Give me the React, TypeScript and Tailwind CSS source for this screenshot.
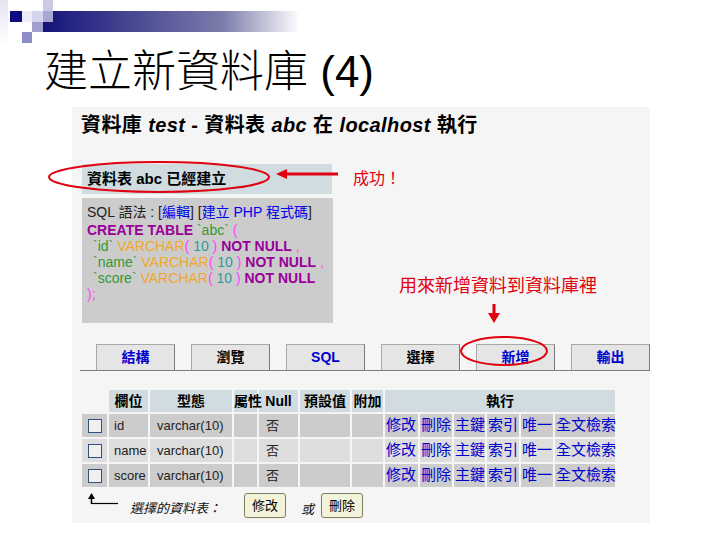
import React from 'react';

const F = "font-['Liberation_Sans','Noto_Sans_CJK_TC',sans-serif]";

const Deco = () => (
  <svg width="300" height="45" viewBox="0 0 300 45" className="block">
    <defs>
      <linearGradient id="bar" gradientUnits="userSpaceOnUse" x1="43" y1="0" x2="300" y2="0">
        <stop offset="0" stopColor="#14147a" />
        <stop offset="0.7" stopColor="#7c7cab" />
        <stop offset="1" stopColor="#ffffff" />
      </linearGradient>
      <linearGradient id="strip" x1="0" x2="0" y1="0" y2="1">
        <stop offset="0" stopColor="#e4e4f2" />
        <stop offset="1" stopColor="#ffffff" />
      </linearGradient>
    </defs>
    <rect x="0" y="0" width="8" height="45" fill="url(#strip)" />
    <rect x="43" y="11" width="257" height="21" fill="url(#bar)" />
    <rect x="43" y="0" width="10" height="11" fill="#cacae4" />
    <rect x="10" y="11" width="12" height="11" fill="#0c0c80" />
    <rect x="22" y="11" width="10" height="11" fill="#ececf6" />
    <rect x="32" y="11" width="11" height="11" fill="#d4d4ec" />
    <rect x="43" y="11" width="10" height="11" fill="#a8a8d4" />
    <rect x="32" y="22" width="11" height="10" fill="#a0a0d0" />
    <rect x="22" y="32" width="10" height="11" fill="#8c8cc6" />
  </svg>
);

const tabs = [
  { label: '結構', blue: true },
  { label: '瀏覽', blue: false },
  { label: 'SQL', blue: true },
  { label: '選擇', blue: false },
  { label: '新增', blue: true },
  { label: '輸出', blue: true },
];

const fields = ['id', 'name', 'score'];
const acts = ['修改', '刪除', '主鍵', '索引', '唯一', '全文檢索'];

const Box = () => (
  <span className="inline-block w-[14px] h-[14px] border border-[#2f5378] bg-[#f0f0f0] align-middle" />
);

const Btn = ({ children }: { children: React.ReactNode }) => (
  <span className="inline-flex items-start justify-center pt-[2px] w-[42px] h-[25px] bg-[#f3f3dc] border border-[#7d7d5a] rounded-[3px] text-[13px] text-black">
    {children}
  </span>
);

const P = ({ children }: { children: React.ReactNode }) => <span className="text-[#ff44ff]">{children}</span>;
const G = ({ children }: { children: React.ReactNode }) => <span className="text-[#339933]">{children}</span>;
const O = ({ children }: { children: React.ReactNode }) => <span className="text-[#f0a830]">{children}</span>;
const T = ({ children }: { children: React.ReactNode }) => <span className="text-[#2f9a9a]">{children}</span>;
const K = ({ children }: { children: React.ReactNode }) => <span className="text-[#990099] font-bold">{children}</span>;

const Col = ({ name }: { name: string }) => (
  <div className="pl-[6px]">
    <G>`{name}`</G> <O>VARCHAR</O><P>(</P> <T>10</T> <P>)</P> <K>NOT NULL</K>
    {name !== 'score' && <P> ,</P>}
  </div>
);

export default function App() {
  return (
    <div className={`w-[720px] h-[540px] bg-white overflow-hidden ${F}`}>
      <Deco />
      <div className="pl-[44px] text-[44px] leading-[54px] font-light text-black">建立新資料庫 (4)</div>

      <div className="relative mt-[8px] ml-[72px] w-[578px] h-[416px] bg-[#f5f5f5] text-[#111]">
        <div className="pl-[9px] pt-[7px] text-[20px] leading-[22px] font-bold tracking-[0.4px] text-black">
          資料庫 <i>test</i> - 資料表 <i>abc</i> 在 <i>localhost</i> 執行
        </div>

        <div className="mt-[28px] ml-[10px] flex items-center">
          <div className="w-[250px] h-[30px] bg-[#d0dce0] pl-[5px] flex items-center font-bold text-[15px] text-black">
            資料表 abc 已經建立
          </div>
          <div className="ml-[21px] text-[16px] text-[#e00010]">成功！</div>
        </div>

        <div className="mt-[4px] ml-[10px] flex items-end">
          <div className="w-[251px] h-[125px] bg-[#cccccc] px-[5px] pt-[6px] text-[14px] leading-[16px]">
            <div className="mb-[2px] text-[#222]">
              SQL 語法 : [<span className="text-[#0000ee]">編輯</span>] [<span className="text-[#0000ee]">建立 PHP 程式碼</span>]
            </div>
            <div>
              <K>CREATE TABLE</K> <G>`abc`</G> <P>(</P>
            </div>
            {fields.map((f) => (
              <Col key={f} name={f} />
            ))}
            <div>
              <P>);</P>
            </div>
          </div>
          <div className="ml-[66px] flex flex-col">
            <div className="text-[18px] leading-[22px] text-[#e00010]">用來新增資料到資料庫裡</div>
            <svg width="12" height="19" viewBox="0 0 12 19" className="ml-[89px] mt-[7px]">
              <rect x="4.5" y="0" width="3" height="10" fill="#e00010" />
              <polygon points="0,9 12,9 6,19" fill="#e00010" />
            </svg>
          </div>
        </div>

        <div className="mt-[21px] ml-[8px] pl-[16px] flex gap-[16px] items-end border-b border-[#808080]">
          {tabs.map((t) => (
            <div
              key={t.label}
              className={`w-[79px] h-[26px] bg-[#e5e5e5] border border-b-0 border-[#a8a8a8] border-r-[#7a7a7a] flex items-center justify-center text-[14px] font-bold ${t.blue ? 'text-[#0000cc]' : 'text-black'}`}
            >
              {t.label}
            </div>
          ))}
        </div>

        <table className="mt-[17px] ml-[8px] w-[537px] table-fixed border-separate border-spacing-[2px] text-[13px]">
          <colgroup>
            <col className="w-[25px]" />
            <col className="w-[39px]" />
            <col className="w-[82px]" />
            <col className="w-[23px]" />
            <col className="w-[39px]" />
            <col className="w-[50px]" />
            <col className="w-[31px]" />
            <col className="w-[33px]" />
            <col className="w-[32px]" />
            <col className="w-[31px]" />
            <col className="w-[32px]" />
            <col className="w-[32px]" />
            <col className="w-[60px]" />
          </colgroup>
          <thead>
            <tr className="h-[22px] text-[14px] font-bold text-black">
              <th className="p-0" />
              <th className="p-0 bg-[#d0dce0] whitespace-nowrap">欄位</th>
              <th className="p-0 bg-[#d0dce0] whitespace-nowrap">型態</th>
              <th className="p-0 bg-[#d0dce0] whitespace-nowrap">屬性</th>
              <th className="p-0 bg-[#d0dce0] whitespace-nowrap">Null</th>
              <th className="p-0 bg-[#d0dce0] whitespace-nowrap">預設值</th>
              <th className="p-0 bg-[#d0dce0] whitespace-nowrap">附加</th>
              <th colSpan={6} className="p-0 bg-[#d0dce0]">執行</th>
            </tr>
          </thead>
          <tbody>
            {fields.map((f, i) => {
              const bg = i % 2 === 1 ? 'bg-[#dddddd]' : 'bg-[#cccccc]';
              return (
                <tr key={f} className="h-[23px] text-[#222]">
                  <td className={`p-0 text-center ${bg}`}><Box /></td>
                  <td className={`p-0 pl-[5px] ${bg}`}>{f}</td>
                  <td className={`p-0 pl-[7px] ${bg}`}>varchar(10)</td>
                  <td className={`p-0 ${bg}`} />
                  <td className={`p-0 pl-[7px] ${bg}`}>否</td>
                  <td className={`p-0 ${bg}`} />
                  <td className={`p-0 ${bg}`} />
                  {acts.map((a) => (
                    <td key={a} className={`p-0 pl-[1px] text-[15px] text-[#0000cc] whitespace-nowrap ${bg}`}>{a}</td>
                  ))}
                </tr>
              );
            })}
          </tbody>
        </table>

        <div className="mt-[3px] ml-[16px] flex items-center text-[13px]">
          <svg width="32" height="14" viewBox="0 0 32 14" className="self-start mt-[1px]">
            <polygon points="3.5,0 0,6 7,6" fill="#000" />
            <line x1="3.5" y1="5" x2="3.5" y2="11" stroke="#000" strokeWidth="1.5" />
            <line x1="3" y1="10.5" x2="30" y2="10.5" stroke="#000" strokeWidth="1.2" />
          </svg>
          <span className="ml-[10px] italic mt-[6px]">選擇的資料表：</span>
          <span className="ml-[23px]"><Btn>修改</Btn></span>
          <span className="ml-[15px] italic mt-[8px]">或</span>
          <span className="ml-[7px]"><Btn>刪除</Btn></span>
        </div>

        <svg width="224" height="34" viewBox="0 0 224 34" className="absolute left-[-25px] top-[53px]">
          <ellipse cx="112" cy="17" rx="110" ry="15" fill="none" stroke="#e00010" strokeWidth="2" />
        </svg>
        <svg width="62" height="10" viewBox="0 0 62 10" className="absolute left-[204px] top-[62px]">
          <polygon points="0,5 11,0 11,10" fill="#e00010" />
          <rect x="10" y="3.5" width="52" height="3" fill="#e00010" />
        </svg>
        <svg width="90" height="32" viewBox="0 0 90 32" className="absolute left-[387px] top-[228px]">
          <ellipse cx="45" cy="16" rx="43" ry="14" fill="none" stroke="#e00010" strokeWidth="2" />
        </svg>
      </div>
    </div>
  );
}
